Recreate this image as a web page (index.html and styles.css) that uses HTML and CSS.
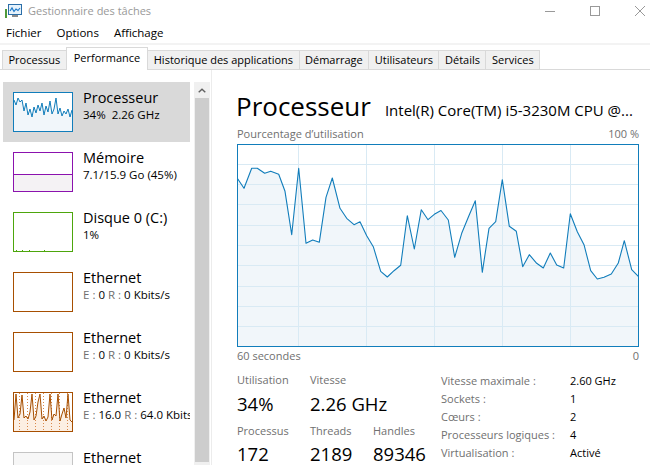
FILE: index.html
```html
<!DOCTYPE html>
<html lang="fr">
<head>
<meta charset="utf-8">
<title>Gestionnaire des tâches</title>
<link rel="stylesheet" href="styles.css">
</head>
<body>
<header class="titlebar">
  <svg class="app-icon" viewBox="0 0 17 15" width="17" height="15">
    <rect x="0" y="6" width="2" height="9" fill="#4f9a3a"/>
    <rect x="3.5" y="1.5" width="13" height="10" fill="#e6f2fb" stroke="#2b6ea8"/>
    <polyline points="5,8 7,5 9,8.5 11,6 13,7.5 15,5" fill="none" stroke="#1e78c8" stroke-width="1.2"/>
    <rect x="7" y="12" width="6" height="2" fill="#8a8a8a"/>
  </svg>
  <span class="title">Gestionnaire des tâches</span>
  <div class="controls">
    <svg viewBox="0 0 10 10" width="10" height="10"><line x1="0" y1="5.5" x2="10" y2="5.5" stroke="#999" stroke-width="1"/></svg>
    <svg viewBox="0 0 10 10" width="10" height="10"><rect x="0.5" y="0.5" width="9" height="9" fill="none" stroke="#999" stroke-width="1"/></svg>
    <svg viewBox="0 0 10 10" width="10" height="10"><path d="M0,0 L10,10 M10,0 L0,10" stroke="#999" stroke-width="1"/></svg>
  </div>
</header>

<nav class="menu">
  <span>Fichier</span>
  <span>Options</span>
  <span>Affichage</span>
</nav>

<div class="tabs">
  <div class="tab">Processus</div>
  <div class="tab active">Performance</div>
  <div class="tab">Historique des applications</div>
  <div class="tab">Démarrage</div>
  <div class="tab">Utilisateurs</div>
  <div class="tab">Détails</div>
  <div class="tab">Services</div>
</div>

<main class="main">
  <aside class="sidebar">
    <div class="list">
      <div class="item selected">
        <svg class="thumb" viewBox="0 0 60 40" width="60" height="40">
          <rect x="0" y="0" width="60" height="40" fill="#fff"/>
          <polygon fill="#f1f6fa" points="1,39 1,8 3,13 5,6 7,10 9,8 11,19 13,11 15,23 17,17 19,25 21,15 23,21 25,13 27,19 29,11 31,23 33,14 35,20 37,9 39,22 41,17 43,6 45,22 47,16 49,24 51,19 53,22 55,17 57,25 59,18 59,39"/>
          <polyline fill="none" stroke="#117dbb" stroke-width="1" points="1,8 3,13 5,6 7,10 9,8 11,19 13,11 15,23 17,17 19,25 21,15 23,21 25,13 27,19 29,11 31,23 33,14 35,20 37,9 39,22 41,17 43,6 45,22 47,16 49,24 51,19 53,22 55,17 57,25 59,18"/>
          <rect x="0.5" y="0.5" width="59" height="39" fill="none" stroke="#117dbb"/>
        </svg>
        <div class="info">
          <div class="name">Processeur</div>
          <div class="sub">34%&nbsp; 2.26 GHz</div>
        </div>
      </div>
      <div class="item">
        <svg class="thumb" viewBox="0 0 60 40" width="60" height="40">
          <rect x="1" y="22" width="58" height="17" fill="#f4f2f4"/>
          <line x1="1" y1="22.5" x2="59" y2="22.5" stroke="#8b12ae"/>
          <rect x="0.5" y="0.5" width="59" height="39" fill="none" stroke="#8b12ae"/>
        </svg>
        <div class="info">
          <div class="name">Mémoire</div>
          <div class="sub">7.1/15.9 Go (45%)</div>
        </div>
      </div>
      <div class="item">
        <svg class="thumb" viewBox="0 0 60 40" width="60" height="40">
          <g fill="#4da60c"><rect x="3" y="38" width="1" height="1"/><rect x="9" y="38" width="1" height="1"/><rect x="16" y="38" width="1" height="1"/><rect x="31" y="38" width="1" height="1"/></g>
          <rect x="0.5" y="0.5" width="59" height="39" fill="none" stroke="#4da60c"/>
        </svg>
        <div class="info">
          <div class="name">Disque 0 (C:)</div>
          <div class="sub">1%</div>
        </div>
      </div>
      <div class="item">
        <svg class="thumb" viewBox="0 0 60 40" width="60" height="40">
          <rect x="0.5" y="0.5" width="59" height="39" fill="none" stroke="#a74f01"/>
        </svg>
        <div class="info">
          <div class="name">Ethernet</div>
          <div class="sub"><span class="dim">E :</span> 0 <span class="dim">R :</span> 0 Kbits/s</div>
        </div>
      </div>
      <div class="item">
        <svg class="thumb" viewBox="0 0 60 40" width="60" height="40">
          <rect x="0.5" y="0.5" width="59" height="39" fill="none" stroke="#a74f01"/>
        </svg>
        <div class="info">
          <div class="name">Ethernet</div>
          <div class="sub"><span class="dim">E :</span> 0 <span class="dim">R :</span> 0 Kbits/s</div>
        </div>
      </div>
      <div class="item">
        <svg class="thumb" viewBox="0 0 60 40" width="60" height="40">
          <polygon fill="#fcefe3" points="1,39 1,28 3,2 5,26 7,22 9,3 11,26 13,24 15,27 17,20 19,2 21,28 23,24 25,10 27,2 29,27 31,24 33,29 35,25 37,2 39,28 41,22 43,24 45,2 47,29 49,22 51,16 53,26 55,2 57,28 59,30 59,39"/>
          <g stroke="#d9884a" stroke-width="1" stroke-dasharray="1,2">
            <line x1="6.5" y1="1" x2="6.5" y2="39"/><line x1="14.5" y1="1" x2="14.5" y2="39"/><line x1="22.5" y1="1" x2="22.5" y2="39"/><line x1="30.5" y1="1" x2="30.5" y2="39"/><line x1="38.5" y1="1" x2="38.5" y2="39"/><line x1="46.5" y1="1" x2="46.5" y2="39"/><line x1="54.5" y1="1" x2="54.5" y2="39"/>
          </g>
          <polyline fill="none" stroke="#a74f01" stroke-width="1" points="1,28 3,2 5,26 7,22 9,3 11,26 13,24 15,27 17,20 19,2 21,28 23,24 25,10 27,2 29,27 31,24 33,29 35,25 37,2 39,28 41,22 43,24 45,2 47,29 49,22 51,16 53,26 55,2 57,28 59,30"/>
          <rect x="0.5" y="0.5" width="59" height="39" fill="none" stroke="#a74f01"/>
        </svg>
        <div class="info">
          <div class="name">Ethernet</div>
          <div class="sub"><span class="dim">E :</span> 16.0 <span class="dim">R :</span> 64.0 Kbits/s</div>
        </div>
      </div>
      <div class="item">
        <svg class="thumb" viewBox="0 0 60 40" width="60" height="40">
          <rect x="0.5" y="0.5" width="59" height="39" fill="#f7f7f7" stroke="#c4c4c4"/>
        </svg>
        <div class="info">
          <div class="name">Ethernet</div>
          <div class="sub"><span class="dim">E :</span> 0 <span class="dim">R :</span> 0 Kbits/s</div>
        </div>
      </div>
    </div>
    <div class="scrollbar">
      <div class="arrow">
        <svg viewBox="0 0 8 5" width="8" height="5"><polyline points="0.7,4.3 4,1.2 7.3,4.3" fill="none" stroke="#606060" stroke-width="1.4"/></svg>
      </div>
      <div class="thumb-bar"></div>
    </div>
  </aside>

  <section class="detail">
    <div class="head">
      <h1 class="cpu-title">Processeur</h1>
      <div class="cpu-model">Intel(R) Core(TM) i5-3230M CPU @...</div>
    </div>
    <div class="axis top">
      <span>Pourcentage d’utilisation</span>
      <span>100 %</span>
    </div>
    <svg class="graph" viewBox="237 145 402 203" width="402" height="203">
      <rect x="237" y="145" width="402" height="203" fill="#fff"/>
      <polygon fill="#f1f6fa" points="237.3,179.3 244,189.3 251.7,169.3 257.3,169.3 264.7,174.3 270.7,172.3 278.7,175.3 285,192.3 291.7,235.7 298.7,169.3 306,244.3 312.7,241 319.3,243.3 326,198.3 332.3,179 340,209.3 346.7,219.3 354,225.7 360,222.7 366.7,236.7 373.3,247.7 380.7,272.3 387.3,278 394,271.7 400.7,266.3 407.3,216.7 414.3,250 421.3,210.7 428,220.7 434.3,215.3 441,211.5 448.3,221 454.7,258.3 461.7,234.3 468.7,217.3 475.3,201.7 482.3,273.3 489,229.3 495.7,222.7 502.3,180.7 509.3,227.3 516.3,232.3 522.7,267.7 529.3,255.7 536.7,264.3 543.3,269 550.3,254 556.7,266 563.7,269 570.3,214.7 577.3,232.7 584,245.7 590.7,271.7 597.3,280 604,278.3 611.3,275 618.3,264 624.3,241.7 631.7,270.7 638.3,277.3 638.3,347 237.3,347"/>
      <g stroke="#d9eaf4" stroke-width="1">
        <line x1="238" y1="165.5" x2="638" y2="165.5"/>
        <line x1="238" y1="185.5" x2="638" y2="185.5"/>
        <line x1="238" y1="205.5" x2="638" y2="205.5"/>
        <line x1="238" y1="226.5" x2="638" y2="226.5"/>
        <line x1="238" y1="246.5" x2="638" y2="246.5"/>
        <line x1="238" y1="266.5" x2="638" y2="266.5"/>
        <line x1="238" y1="287.5" x2="638" y2="287.5"/>
        <line x1="238" y1="307.5" x2="638" y2="307.5"/>
        <line x1="238" y1="327.5" x2="638" y2="327.5"/>
        <line x1="298.5" y1="146" x2="298.5" y2="347"/>
        <line x1="366.5" y1="146" x2="366.5" y2="347"/>
        <line x1="434.5" y1="146" x2="434.5" y2="347"/>
        <line x1="502.5" y1="146" x2="502.5" y2="347"/>
        <line x1="570.5" y1="146" x2="570.5" y2="347"/>
      </g>
      <polyline fill="none" stroke="#117dbb" stroke-width="1.1" stroke-linejoin="round" points="237.3,179.3 244,189.3 251.7,169.3 257.3,169.3 264.7,174.3 270.7,172.3 278.7,175.3 285,192.3 291.7,235.7 298.7,169.3 306,244.3 312.7,241 319.3,243.3 326,198.3 332.3,179 340,209.3 346.7,219.3 354,225.7 360,222.7 366.7,236.7 373.3,247.7 380.7,272.3 387.3,278 394,271.7 400.7,266.3 407.3,216.7 414.3,250 421.3,210.7 428,220.7 434.3,215.3 441,211.5 448.3,221 454.7,258.3 461.7,234.3 468.7,217.3 475.3,201.7 482.3,273.3 489,229.3 495.7,222.7 502.3,180.7 509.3,227.3 516.3,232.3 522.7,267.7 529.3,255.7 536.7,264.3 543.3,269 550.3,254 556.7,266 563.7,269 570.3,214.7 577.3,232.7 584,245.7 590.7,271.7 597.3,280 604,278.3 611.3,275 618.3,264 624.3,241.7 631.7,270.7 638.3,277.3"/>
      <rect x="237.5" y="145.5" width="401" height="202" fill="none" stroke="#117dbb" stroke-width="1"/>
    </svg>
    <div class="axis bottom">
      <span>60 secondes</span>
      <span>0</span>
    </div>

    <div class="stats">
      <div class="dyn">
        <div class="stat"><div class="label">Utilisation</div><div class="value">34%</div></div>
        <div class="stat"><div class="label">Vitesse</div><div class="value">2.26 GHz</div></div>
        <div class="stat"></div>
        <div class="stat row2"><div class="label">Processus</div><div class="value">172</div></div>
        <div class="stat row2"><div class="label">Threads</div><div class="value">2189</div></div>
        <div class="stat row2"><div class="label">Handles</div><div class="value">89346</div></div>
      </div>
      <dl class="specs">
        <dt>Vitesse maximale :</dt><dd>2.60 GHz</dd>
        <dt>Sockets :</dt><dd>1</dd>
        <dt>Cœurs :</dt><dd>2</dd>
        <dt>Processeurs logiques :</dt><dd>4</dd>
        <dt>Virtualisation :</dt><dd>Activé</dd>
      </dl>
    </div>
  </section>
</main>
</body>
</html>
```

FILE: styles.css
```css
* { box-sizing: border-box; }

html, body { margin: 0; padding: 0; }

body {
  width: 650px;
  height: 465px;
  overflow: hidden;
  background: #fff;
  color: #000;
  font-family: "Open Sans", "Noto Sans", sans-serif;
}

/* Title bar */
.titlebar {
  display: flex;
  align-items: center;
  height: 21px;
  padding-left: 5px;
}
.app-icon { flex: none; margin-right: 6px; }
.title { font-size: 11px; color: #999; }
.controls {
  margin-left: auto;
  margin-right: 5px;
  display: flex;
  align-items: center;
  gap: 35px;
}
.controls svg { display: block; }

/* Menu */
.menu {
  display: flex;
  align-items: center;
  height: 22px;
  padding-left: 6px;
  gap: 15px;
  font-size: 11.5px;
}

/* Tabs */
.tabs {
  display: flex;
  align-items: flex-end;
  height: 27px;
  padding-left: 2px;
  border-top: 2px solid #f3f3f3;
  border-bottom: 1px solid #d9d9d9;
}
.tab {
  height: 19px;
  line-height: 18px;
  padding: 0 5.5px;
  margin-right: -1px;
  border: 1px solid #d9d9d9;
  border-bottom: 0;
  background: #f0f0f0;
  font-size: 11px;
  white-space: nowrap;
}
.tab.active {
  height: 23px;
  line-height: 19px;
  margin-bottom: -1px;
  padding: 0 7px;
  background: #fff;
}

/* Main */
.main {
  display: flex;
  height: 395px;
}

.sidebar {
  flex: none;
  width: 212px;
  display: flex;
  padding-top: 12px;
  border-right: 1px solid #ececec;
}
.list {
  width: 187px;
  margin-left: 3px;
  overflow: hidden;
}
.item {
  display: flex;
  height: 60px;
  padding-left: 10px;
  gap: 10px;
  white-space: nowrap;
  overflow: hidden;
}
.item.selected { background: #d9d9d9; }
.thumb { display: block; flex: none; margin-top: 10px; }
.info { padding-top: 8px; }
.name { font-size: 14.5px; line-height: 16px; }
.sub { font-size: 11.5px; line-height: 15px; margin-top: 1px; }
.dim { color: #707070; }

.scrollbar {
  flex: none;
  width: 16px;
  margin-left: 4px;
  background: #f0f0f0;
  display: flex;
  flex-direction: column;
}
.arrow {
  height: 16px;
  display: flex;
  align-items: center;
  justify-content: center;
}
.arrow svg { display: block; }
.thumb-bar {
  flex: 1;
  margin: 0 1px 3px;
  background: #cdcdcd;
}

/* Detail */
.detail {
  flex: 1;
  padding: 20px 11px 0 25px;
}
.head {
  display: flex;
  align-items: baseline;
  gap: 14px;
  white-space: nowrap;
}
.cpu-title {
  margin: 0;
  font-size: 26px;
  font-weight: 400;
  line-height: 32px;
  margin-left: -1px;
}
.cpu-model { font-size: 15px; }

.axis {
  display: flex;
  justify-content: space-between;
  font-size: 11px;
  line-height: 14px;
  color: #707070;
}
.axis.top { margin-top: 5px; }
.graph { display: block; margin-top: 3px; }
.axis.bottom { margin-top: 2px; }

.stats {
  display: flex;
  align-items: flex-start;
  margin-top: 9px;
}
.dyn {
  flex: none;
  width: 204px;
  display: grid;
  grid-template-columns: 73px 63px 68px;
  align-content: start;
}
.stat { white-space: nowrap; }
.stat .label {
  font-size: 11px;
  line-height: 16px;
  color: #707070;
}
.stat .value {
  font-size: 18.5px;
  line-height: 24px;
  margin-top: 4px;
}
.stat.row2 { margin-top: 7px; }
.stat.row2 .value { margin-top: 3px; }

.specs {
  margin: 0;
  display: grid;
  grid-template-columns: 129px auto;
  align-content: start;
  font-size: 11px;
  line-height: 18px;
  white-space: nowrap;
}
.specs dt { color: #707070; }
.specs dd { margin: 0; }
```
